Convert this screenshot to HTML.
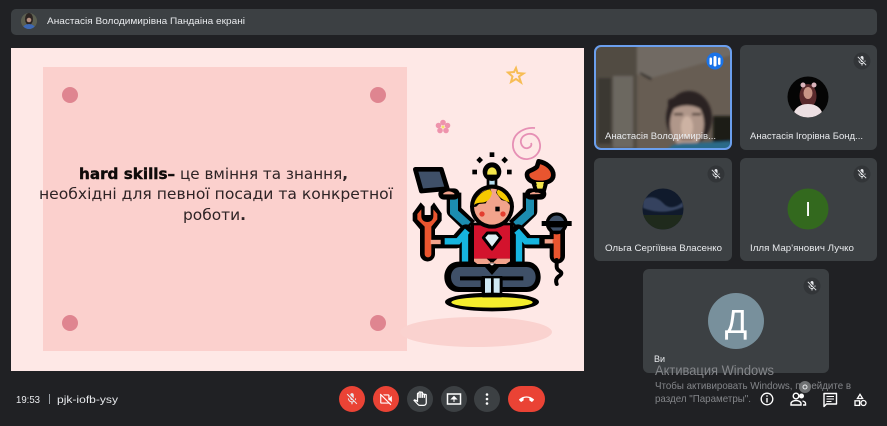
<!DOCTYPE html>
<html><head><meta charset="utf-8"><style>
html,body{margin:0;padding:0;background:#202124;overflow:hidden}
svg{display:block}
text{font-family:"Liberation Sans",sans-serif;fill:#e8eaed;white-space:pre}
.n{font-size:9.5px}
.s{font-family:"DejaVu Sans",sans-serif;fill:#2e2325;font-size:15px}
.a{fill:#84868a}
</style></head><body>
<svg width="887" height="426" viewBox="0 0 887 426" xmlns="http://www.w3.org/2000/svg">
<defs>
<symbol id="mo" viewBox="0 0 24 24"><path fill="#e8eaed" d="M19 11h-1.700c0 .74-.16 1.430-.43 2.050l1.230 1.230c.56-.98.9-2.090.9-3.280zm-4.020.17c0-.06.02-.11.02-.17V5c0-1.660-1.340-3-3-3s-3 1.340-3 3v.18l5.980 5.990zM4.270 3L3 4.270l6.010 6.010V11c0 1.660 1.330 3 2.990 3 .22 0 .44-.03.65-.08l1.660 1.660c-.71.33-1.500.52-2.310.52-2.760 0-5.300-2.100-5.300-5.100H5c0 3.410 2.720 6.230 6 6.720V21h2v-3.280c.91-.13 1.770-.45 2.540-.9L19.730 21 21 19.730 4.270 3z"/></symbol>
<clipPath id="t1"><rect x="595" y="46" width="136" height="103" rx="6"/></clipPath>
<clipPath id="a0"><circle cx="29" cy="21" r="8"/></clipPath>
<clipPath id="a2"><circle cx="808" cy="97" r="20.500"/></clipPath>
<clipPath id="a3"><circle cx="663" cy="209" r="20.500"/></clipPath>
<clipPath id="hd"><circle cx="246" cy="170" r="54"/></clipPath>
<filter id="b1" x="-5%" y="-5%" width="110%" height="110%"><feGaussianBlur stdDeviation="1.200"/></filter>
<filter id="b2"><feGaussianBlur stdDeviation="0.700"/></filter>
</defs>
<rect width="887" height="426" fill="#202124"/>

<!-- top bar -->
<rect x="11" y="9" width="866" height="26" rx="5" fill="#3c4043"/>
<g clip-path="url(#a0)"><rect x="21" y="13" width="16" height="16" fill="#5c5f50"/><ellipse cx="29" cy="19" rx="4" ry="6" fill="#2c2422"/><circle cx="29" cy="20" r="2.300" fill="#b58f80"/><ellipse cx="29" cy="29" rx="6.500" ry="5" fill="#3d68b5"/></g>
<text x="47" y="24" class="n" textLength="198" lengthAdjust="spacingAndGlyphs">Анастасія Володимирівна Пандаіна екрані</text>

<!-- slide -->
<rect x="11" y="48" width="573" height="323" fill="#fee8e6"/>
<rect x="43" y="67" width="364" height="284" fill="#fbd0cd"/>
<ellipse cx="476" cy="332" rx="76" ry="15" fill="#fad2cf"/>
<g fill="#df8590"><circle cx="70" cy="95" r="8"/><circle cx="378" cy="95" r="8"/><circle cx="70" cy="323" r="8"/><circle cx="378" cy="323" r="8"/></g>
<text x="79" y="179" class="s" textLength="269" lengthAdjust="spacingAndGlyphs"><tspan font-weight="bold" fill="#0f0b0a" stroke="#0f0b0a" stroke-width=".4">hard skills–</tspan> це вміння та знання<tspan font-weight="bold">,</tspan></text>
<text x="39" y="199" class="s" textLength="354" lengthAdjust="spacingAndGlyphs">необхідні для певної посади та конкретної</text>
<text x="183" y="220" class="s" textLength="63" lengthAdjust="spacingAndGlyphs">роботи<tspan font-weight="bold">.</tspan></text>

<!-- decorations -->
<path d="M516 68l1.500 5 6 .5-4.500 3 2 6-5-3.500-5 3 1.500-5.500-4.500-4 6-.5z" fill="none" stroke="#f7bd55" stroke-width="2"/>
<g fill="#ee93ac"><circle cx="443" cy="122.500" r="2.800"/><circle cx="447.500" cy="125.500" r="2.800"/><circle cx="446" cy="130.500" r="2.800"/><circle cx="440" cy="130.500" r="2.800"/><circle cx="438.500" cy="125.500" r="2.800"/></g><circle cx="443" cy="127" r="1.500" fill="#f4e36a"/>
<path d="M535 128c-9-1-21 4-22 15-1 9 6 17 15 16 8-1 13-8 12-15-1-7-6-11-12-10-5 1-8 5-7 9 1 4 4 6 7 5 3-1 4-3 3-5" fill="none" stroke="#e690b5" stroke-width="1.800"/>

<!-- figure, drawn in 3x local coordinates -->
<g transform="translate(410 150) scale(.33333)">
<g fill="#000"><rect x="239" y="7" width="14" height="14"/><path d="M209 20l10 10-10 10-10-10zM284 20l10 10-10 10-10-10z"/><rect x="187" y="59" width="14" height="14"/><rect x="291" y="59" width="14" height="14"/></g>

<!-- upper arms -->
<path d="M132 128v55l48 46M360 128v55l-48 46" fill="none" stroke="#000" stroke-width="44" stroke-linejoin="round"/>
<path d="M132 145v42l42 38M360 145v42l-42 38" fill="none" stroke="#1c8db0" stroke-width="24"/>
<!-- hands -->
<path d="M102 132h30" stroke="#000" stroke-width="34" stroke-linecap="round"/>
<path d="M100 130q16-12 33 0v3h-33z" fill="#f2a38c"/>
<path d="M362 132h30" stroke="#000" stroke-width="34" stroke-linecap="round"/>
<path d="M360 133v-3q16-10 33 2z" fill="#f2a38c"/>

<!-- laptop -->
<path d="M16 58h78l18 58-78 7z" fill="#3f5068" stroke="#000" stroke-width="14" stroke-linejoin="round"/>

<!-- ice cream -->
<path d="M368 92h42l-8 30h-24z" fill="#f4e64c" stroke="#000" stroke-width="12" stroke-linejoin="round"/>
<path d="M351 74c0-14 20-12 30-24l5-16c25 5 44 22 44 41 0 16-16 24-40 24-25 0-39-11-39-25z" fill="#e9552f" stroke="#000" stroke-width="14" stroke-linejoin="round"/>
<path d="M378 96h24l-4 15h-16z" fill="#f4e64c"/>

<!-- bulb -->
<rect x="230" y="80" width="32" height="34" fill="#000"/>
<rect x="238" y="86" width="16" height="18" fill="#b7ddf0"/>
<circle cx="246" cy="65" r="28" fill="#000"/>
<path d="M232 74c-2-14 6-22 14-22s16 8 14 22z" fill="#f4e64c"/>

<!-- lower arms -->
<path d="M65 275h75l28-32v95M427 275h-75l-28-32v95" fill="none" stroke="#000" stroke-width="40" stroke-linejoin="round"/>
<path d="M104 274h40l28-32M388 274h-40l-28-32" fill="none" stroke="#16b5e0" stroke-width="19"/>
<path d="M165 250v85M327 250v85" fill="none" stroke="#16b5e0" stroke-width="19"/>

<!-- wrench -->
<path d="M8 190L32 157l12 13v25h18v-25l10-13 23 33v22l-20 26v74a22.500 22.500 0 0 1-45 0v-74L8 212z" fill="#000"/>
<path d="M22 192l12-14v20c0 12 8 18 18 18s18-6 18-18v-20l12 14v16l-18 22v82a10 10 0 0 1-20 0v-82l-22-22z" fill="#e9552f"/>
<path d="M62 276h30" stroke="#f2a38c" stroke-width="13"/>

<!-- mic -->
<path d="M442 240v78" stroke="#000" stroke-width="46" stroke-linecap="round"/>
<path d="M441 252v68" stroke="#e9552f" stroke-width="20" stroke-linecap="round"/>
<path d="M404 274h36" stroke="#f2a38c" stroke-width="13"/>
<path d="M428 274h18" stroke="#e9552f" stroke-width="13"/>
<circle cx="440" cy="220" r="33" fill="#000"/>
<path d="M417 220a23 23 0 0 1 46 0zM421 232h38l-8 10h-22z" fill="#3f5068"/>
<rect x="395" y="213" width="90" height="15" fill="#000"/>
<path d="M440 330v20q0 8 10 14t-5 16q-10 8-5 22" fill="none" stroke="#000" stroke-width="12" stroke-linecap="round"/>

<!-- legs -->
<path d="M145 335h85l16 12 16-12h88c25 0 42 20 42 46s-17 45-42 45H145c-25 0-42-20-42-45s17-46 42-46z" fill="#000"/>
<path d="M150 351h75l21 24 21-24h83c16 0 27 13 27 30s-11 30-27 30h-72v-20h62v-12H150v12h62v20h-62c-16 0-27-13-27-30s11-30 27-30z" fill="#3f5068"/>
<!-- stem -->
<rect x="215" y="378" width="62" height="66" fill="#000"/>
<rect x="225" y="385" width="18" height="50" fill="#cfe8f4"/>
<rect x="251" y="385" width="18" height="50" fill="#cfe8f4"/>
<!-- base -->
<ellipse cx="246" cy="456" rx="141" ry="28" fill="#000"/>
<ellipse cx="246" cy="457" rx="122" ry="16" fill="#f5ee2d"/>
<rect x="215" y="430" width="62" height="12" rx="4" fill="#000"/>

<!-- torso -->
<rect x="182" y="218" width="128" height="122" fill="#000"/>
<path d="M192 226h108v100H192z" fill="#d3132d"/>
<path d="M192 326h38l16 14 16-14h38v8l-12 8h-30l-12-6-12 6h-32l-10-8z" fill="#f2a38c"/>
<path d="M220 263l12-14h28l12 14-26 34z" fill="#dff0f6" stroke="#000" stroke-width="9" stroke-linejoin="round"/>

<!-- head -->
<circle cx="246" cy="170" r="66" fill="#000"/>
<g clip-path="url(#hd)">
<rect x="190" y="115" width="112" height="112" fill="#f2a38c"/>
<path d="M188 172l2-30 50-30 5 16-18 32-20 2-8 8z" fill="#000"/>
<path d="M192 165c4-22 25-45 48-47l6 10c-2 16-14 30-30 30-10 0-18 2-24 7z" fill="#f5c900"/>
<path d="M304 170l-2-30-38-28-6 16 16 22 16 4z" fill="#000"/>
<path d="M300 158c-3-18-18-34-36-40l-4 8c4 14 18 24 40 32z" fill="#f5c900"/>
<circle cx="216" cy="192" r="8" fill="#e33d2f"/>
<circle cx="279" cy="192" r="8" fill="#e33d2f"/>
</g>
<rect x="256" y="170" width="13" height="14" fill="#000"/>
</g>

<!-- tile 1 -->
<g clip-path="url(#t1)">
<rect x="595" y="46" width="136" height="103" fill="#675d53"/>
<g filter="url(#b1)">
<path d="M590 40h145v14l-84 24-14-4-2-34z" fill="#716b64"/>
<path d="M592 40h45v112h-45z" fill="#514c43"/>
<rect x="598" y="78" width="13" height="66" fill="#3a3832"/>
<rect x="613" y="76" width="20" height="72" fill="#6c6760"/>
<path d="M640 72l12 6-1 2-11-6z" fill="#2e2a25"/>
<path d="M713 116h21v36h-21z" fill="#1c1a17"/>
<ellipse cx="689" cy="118" rx="23" ry="27" fill="#2a2321"/>
<ellipse cx="687" cy="124" rx="17" ry="24" fill="#b0978a"/>
<path d="M668 112q19-13 38 0l0-12q-19-9-38 0z" fill="#2a2321"/>
<ellipse cx="687" cy="127" rx="6" ry="11" fill="#cdb2a3"/>
<rect x="674" y="113" width="9" height="2.500" fill="#54443d"/><rect x="692" y="113" width="9" height="2.500" fill="#54443d"/>
<rect x="681" y="138" width="12" height="2" fill="#75584e"/>
<path d="M666 152q4-9 20-9t45-2v11z" fill="#2a6a88"/>
</g>
</g>
<rect x="595" y="46" width="136" height="103" rx="6" fill="none" stroke="#6b9fee" stroke-width="2"/>
<circle cx="715" cy="61" r="8.500" fill="#1a73e8"/>
<g fill="#fff"><rect x="709.500" y="57.500" width="2.500" height="7.500" rx="1.200"/><rect x="713.500" y="56" width="3" height="10.500" rx="1.500"/><rect x="718" y="57.500" width="2.500" height="7.500" rx="1.200"/></g>
<text x="605" y="139" class="n" textLength="111" lengthAdjust="spacingAndGlyphs">Анастасія Володимирів...</text>

<!-- tile 2 -->
<rect x="740" y="45" width="137" height="105" rx="6" fill="#3c4043"/>
<circle cx="862" cy="61" r="8.500" fill="#323538"/><use href="#mo" x="856" y="55" width="12" height="12"/>
<g clip-path="url(#a2)" ><rect x="786" y="76" width="44" height="44" fill="#050505"/><ellipse cx="808" cy="96" rx="8.500" ry="12" fill="#5a2a2c"/><ellipse cx="808" cy="93" rx="4.500" ry="6" fill="#c99586"/><path d="M793 118c0-8 5-14 15-14s15 6 15 14z" fill="#ecdfe2"/><circle cx="803" cy="85" r="2.500" fill="#d9b3bb"/><circle cx="814" cy="85" r="2.500" fill="#d9b3bb"/></g>
<text x="750" y="139" class="n" textLength="113" lengthAdjust="spacingAndGlyphs">Анастасія Ігорівна Бонд...</text>

<!-- tile 3 -->
<rect x="594" y="158" width="138" height="103" rx="6" fill="#3c4043"/>
<circle cx="716" cy="174" r="8.500" fill="#323538"/><use href="#mo" x="710" y="168" width="12" height="12"/>
<g clip-path="url(#a3)"><rect x="642" y="188" width="42" height="42" fill="#101a2c"/><path d="M643 199q12-5 20 4t20-1v5q-20 9-40 1z" fill="#34435e" filter="url(#b2)"/><rect x="642" y="215" width="42" height="16" fill="#1f2a1c"/></g>
<text x="605" y="251" class="n" textLength="117" lengthAdjust="spacingAndGlyphs">Ольга Сергіївна Власенко</text>

<!-- tile 4 -->
<rect x="740" y="158" width="137" height="103" rx="6" fill="#3c4043"/>
<circle cx="862" cy="174" r="8.500" fill="#323538"/><use href="#mo" x="856" y="168" width="12" height="12"/>
<circle cx="808" cy="209" r="20.500" fill="#33691e"/>
<text x="808" y="216" font-size="20" text-anchor="middle" style="fill:#fff">І</text>
<text x="750" y="251" class="n" textLength="104" lengthAdjust="spacingAndGlyphs">Ілля Мар'янович Лучко</text>

<!-- tile 5 -->
<rect x="643" y="269" width="186" height="104" rx="6" fill="#3c4043"/>
<circle cx="812" cy="286" r="8.500" fill="#323538"/><use href="#mo" x="806" y="280" width="12" height="12"/>
<circle cx="736" cy="321" r="28" fill="#78909c"/>
<text x="736" y="333" font-size="33" text-anchor="middle" style="fill:#fff">Д</text>
<text x="654" y="362" font-size="9">Ви</text>

<!-- activate windows -->
<text x="655" y="375" class="a" font-size="14" textLength="119" lengthAdjust="spacingAndGlyphs">Активация Windows</text>
<text x="655" y="389" class="a" font-size="10.500" textLength="196" lengthAdjust="spacingAndGlyphs">Чтобы активировать Windows, перейдите в</text>
<text x="655" y="402" class="a" font-size="10.500" textLength="96" lengthAdjust="spacingAndGlyphs">раздел "Параметры".</text>

<!-- bottom left -->
<text x="16" y="403" font-size="10.500" textLength="24" lengthAdjust="spacingAndGlyphs">19:53</text>
<rect x="49" y="394" width="1" height="10" fill="#9aa0a6"/>
<text x="57" y="403" font-size="10.500" textLength="61" lengthAdjust="spacingAndGlyphs">pjk-iofb-ysy</text>

<!-- controls -->
<circle cx="352" cy="399" r="13" fill="#ea4335"/><use href="#mo" x="345" y="392" width="14" height="14"/>
<circle cx="386" cy="399" r="13" fill="#ea4335"/>
<svg x="379" y="392" width="14" height="14" viewBox="0 0 24 24"><path fill="#fff" d="M18 10.480V6c0-1.100-.9-2-2-2H6.830l2 2H16v7.170l2 2v-1.650l4 3.980v-11l-4 3.980zM16 16L6 6 4 4 2.810 2.810 1.390 4.220l.85.85C2.090 5.350 2 5.660 2 6v12c0 1.100.9 2 2 2h12c.34 0 .65-.09.93-.24l2.850 2.850 1.410-1.410L18 18l-2-2zM4 18V6.830L15.170 18H4z"/></svg>
<circle cx="420" cy="399" r="13" fill="#3c4043"/>
<svg x="412.500" y="391" width="15" height="15" viewBox="0 0 24 24"><path fill="none" stroke="#fff" stroke-width="2" d="M22 6.500V19c0 2-1.800 4-4 4h-6.300c-1 0-2-.4-2.700-1.200L2.500 15c.5-.7 1.200-.8 1.800-.5L8 16.500V4.500c0-1.600 2.500-1.600 2.500 0V2.500c0-1.600 2.800-1.600 2.800 0V3c0-1.600 2.700-1.600 2.700 0v3c0-1.500 3-2 3 .5 0-1.500 3-1.500 3 0zM10.500 4.500V11M13.300 2.500V11M16 3V11M19 6.500V11"/></svg>
<circle cx="454" cy="399" r="13" fill="#3c4043"/>
<rect x="447.500" y="394" width="13" height="10" fill="none" stroke="#fff" stroke-width="1.500"/>
<path d="M454 402v-4M451.500 399l2.500-2.500 2.500 2.500z" stroke="#fff" fill="#fff" stroke-width="1"/>
<circle cx="487" cy="399" r="13" fill="#3c4043"/>
<g fill="#fff"><circle cx="487" cy="394.500" r="1.300"/><circle cx="487" cy="399" r="1.300"/><circle cx="487" cy="403.500" r="1.300"/></g>
<rect x="508" y="386" width="37" height="26" rx="13" fill="#ea4335"/>
<svg x="519" y="392" width="15" height="15" viewBox="0 0 24 24"><path fill="#fff" d="M12 9c-1.600 0-3.150.25-4.600.72v3.100c0 .39-.23.74-.56.9-.98.49-1.870 1.120-2.660 1.850-.18.18-.43.28-.7.28-.28 0-.53-.11-.71-.29L.29 13.080c-.18-.17-.29-.42-.29-.7 0-.28.11-.53.29-.71C3.340 8.780 7.460 7 12 7s8.660 1.780 11.710 4.670c.18.18.29.43.29.71 0 .28-.11.53-.29.71l-2.480 2.480c-.18.18-.43.29-.71.29-.27 0-.52-.11-.7-.28-.79-.74-1.690-1.360-2.670-1.850-.33-.16-.56-.5-.56-.9v-3.100C15.150 9.250 13.600 9 12 9z"/></svg>

<!-- right icons -->
<circle cx="767" cy="399" r="5.800" fill="none" stroke="#fff" stroke-width="1.300"/>
<rect x="766.300" y="398" width="1.400" height="4.500" fill="#fff"/><rect x="766.300" y="395.300" width="1.400" height="1.400" fill="#fff"/>
<circle cx="796" cy="396" r="2.800" fill="none" stroke="#fff" stroke-width="1.400"/>
<path d="M791 405v-1.500c0-2 3-3 5-3s5 1 5 3v1.500z" fill="none" stroke="#fff" stroke-width="1.400"/>
<circle cx="801.500" cy="396" r="2.500" fill="#fff"/>
<path d="M802.500 401c1.500.3 3 1 3 2.500v1.500h-2.500" fill="none" stroke="#fff" stroke-width="1.400"/>
<path d="M824 393.500h12.500v10.500h-10l-2.500 2.500z" fill="none" stroke="#fff" stroke-width="1.400" stroke-linejoin="round"/>
<path d="M826.500 396.500h7.500M826.500 399h7.500M826.500 401.500h5" stroke="#fff" stroke-width="1"/>
<path d="M860 394.300l2.600 4.200h-5.200z" fill="none" stroke="#fff" stroke-width="1.300"/>
<rect x="855" y="400.800" width="4.600" height="4.600" fill="none" stroke="#fff" stroke-width="1.300"/>
<circle cx="863.500" cy="403" r="2.500" fill="none" stroke="#fff" stroke-width="1.300"/>
<circle cx="805" cy="387" r="6" fill="#6f7173"/>
<circle cx="805" cy="387" r="2" fill="none" stroke="#e8eaed" stroke-width="1"/>
</svg>
</body></html>
